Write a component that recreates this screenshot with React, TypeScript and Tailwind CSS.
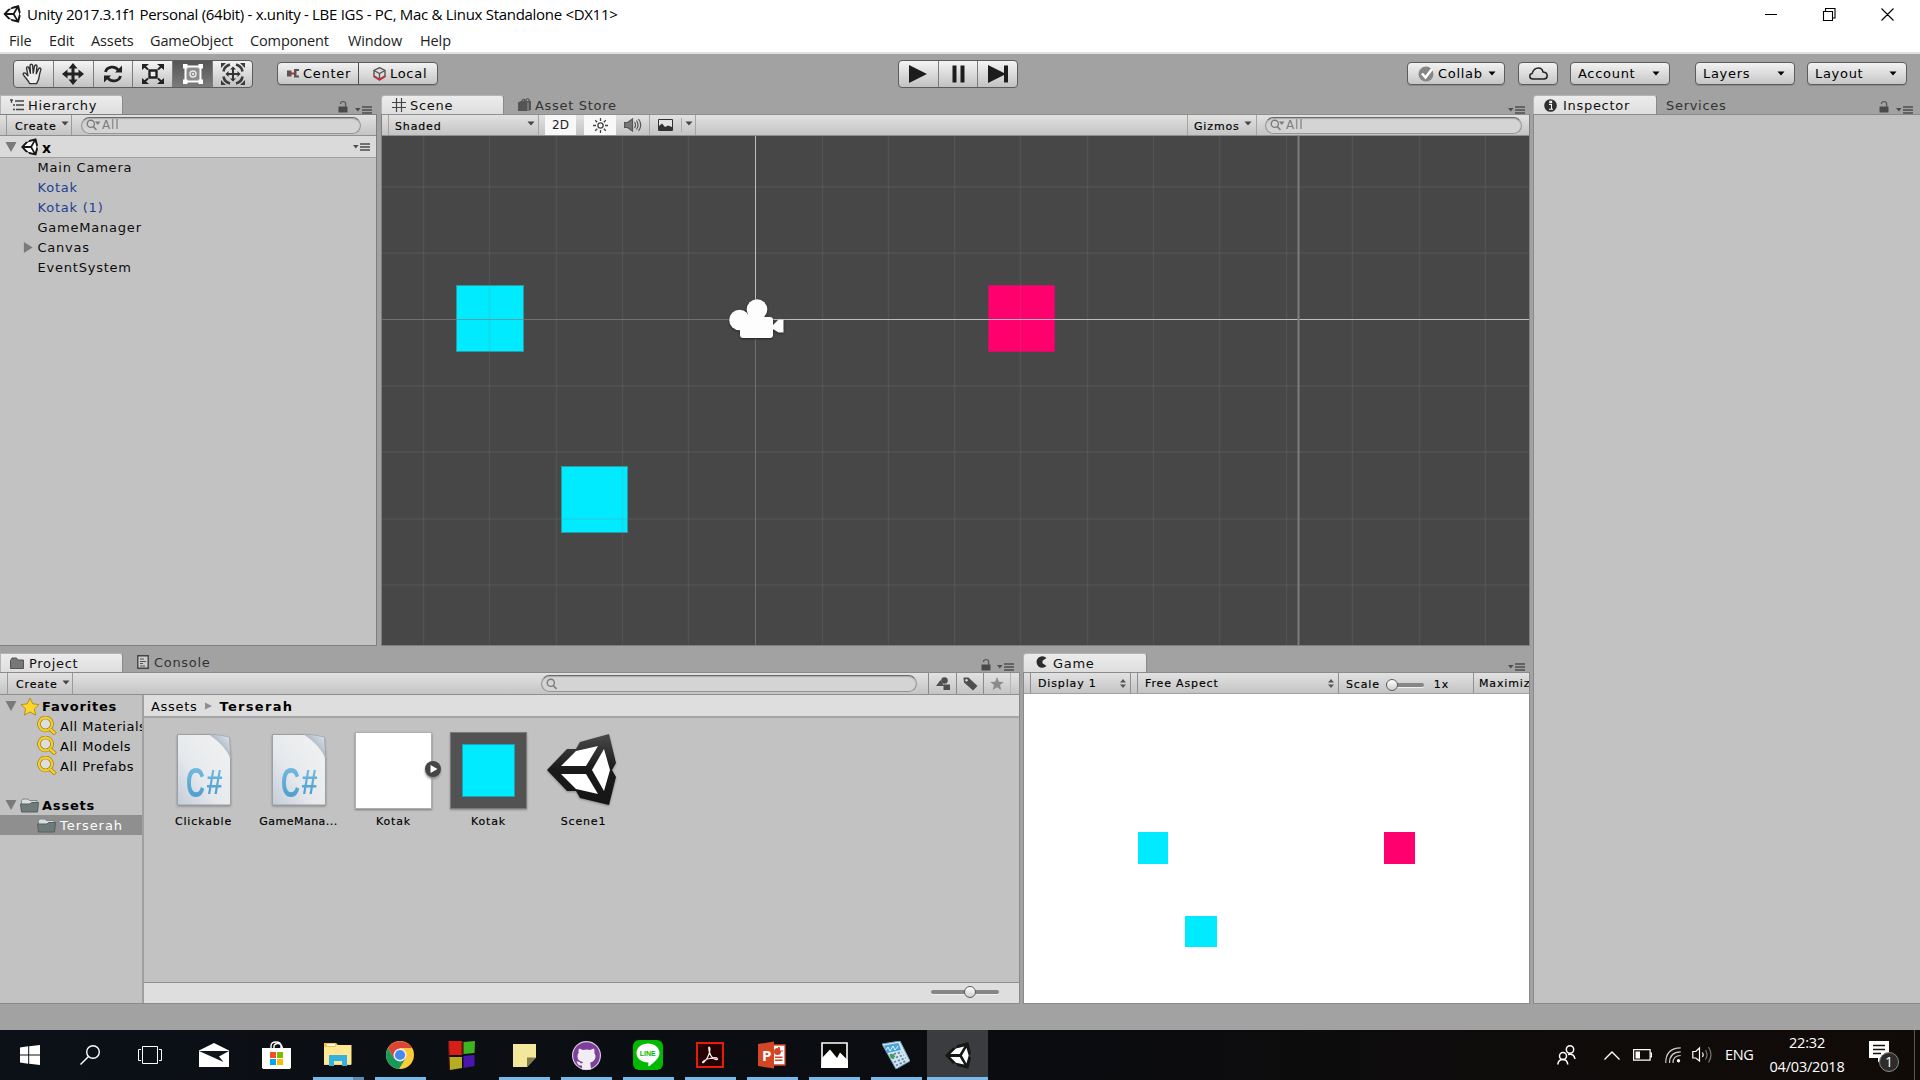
import React from "react";

const ui = "font-['DejaVu_Sans',sans-serif] whitespace-nowrap leading-none";
const text = ui + " text-[13px] tracking-[0.7px]";
const small = ui + " text-[11px] tracking-[0.85px] [-webkit-text-stroke:0.15px]";
const win = "font-['Open_Sans','Noto_Sans',sans-serif] whitespace-nowrap leading-none";
const barBg = "bg-linear-to-b from-[#e2e2e2] to-[#c4c4c4]";
const btn =
  "flex h-[23px] items-center rounded-[4px] border border-[#5c5c5c] bg-linear-to-b from-[#f2f2f2] to-[#c6c6c6] shadow-[0_1px_0_#8a8a8a]";

type P = { className?: string };

function UnityLogo({ className = "", light = false }: P & { light?: boolean }) {
  return (
    <svg viewBox="0 0 69 72" className={"shrink-0 " + className}>
      <defs>
        <linearGradient id="ul" x1="0" y1="0" x2="0" y2="1">
          <stop offset="0" stopColor="#4a4a4a" />
          <stop offset="0.5" stopColor="#191919" />
          <stop offset="1" stopColor="#161616" />
        </linearGradient>
      </defs>
      <path
        fill={light ? "#161616" : "url(#ul)"}
        d="M0 36 20 15h9l4-7L62 0l7 29-4 7 4 7-7 28-29-7-4-7h-9z"
      />
      <path fill="#fff" d="M14 32 29 17l22-5-12 20zM14 40h25l12 20-22-5zM45 36l12-21 6 21-6 21z" />
    </svg>
  );
}

function Caret({ className = "" }: P) {
  return (
    <svg viewBox="0 0 8 5" className={"h-[5px] w-[8px] shrink-0 " + className}>
      <path d="M0.5 0.5h7L4 4.6z" fill="currentColor" />
    </svg>
  );
}

function Fold() {
  return (
    <svg viewBox="0 0 12 10" className="h-[10px] w-[12px] shrink-0">
      <path d="M0.500 0h11L6 10z" fill="#7a7a7a" />
    </svg>
  );
}

function PanelMenu({ className = "" }: P) {
  return (
    <svg viewBox="0 0 17 8" className={"h-[8px] w-[17px] shrink-0 text-[#4d4d4d] " + className}>
      <path d="M0 2h5.600L2.800 5.500z" fill="currentColor" />
      <path d="M7 1h10M7 4h10M7 7h10" stroke="currentColor" strokeWidth="1.300" />
    </svg>
  );
}

function Lock({ className = "" }: P) {
  return (
    <svg viewBox="0 0 10 12" className={"h-[12px] w-[10px] shrink-0 " + className}>
      <path d="M0.500 5.500h9v6h-9z" fill="#4a4a4a" />
      <path d="M2.600 3V2.200C2.600 1 3.600.7 5 .7s2.600.5 2.600 2V6" fill="none" stroke="#5a5a5a" strokeWidth="1.300" />
    </svg>
  );
}

function Tab({ icon, label, className = "" }: P & { icon: React.ReactNode; label: string }) {
  return (
    <div
      className={
        "flex h-[19px] shrink-0 items-center rounded-t-[3px] border-x border-t border-[#b4b4b4] border-r-[#8a8a8a] bg-linear-to-b from-[#ececec] to-[#dedede] " +
        className
      }
    >
      {icon}
      <span className={text + " text-[#111]"}>{label}</span>
    </div>
  );
}

function Search({ className = "", label, arrow = true }: P & { label?: string; arrow?: boolean }) {
  return (
    <div
      className={
        "flex h-[17px] shrink-0 items-center rounded-full border border-[#959595] border-t-[#6a6a6a] bg-[#d4d4d4] pl-[4px] shadow-[inset_0_1px_1px_#a9a9a9] " +
        className
      }
    >
      <svg viewBox="0 0 15 12" className="h-[12px] w-[15px] shrink-0">
        <circle cx="4.800" cy="4.800" r="3.600" fill="none" stroke="#7c7c7c" strokeWidth="1.400" />
        <path d="M7.400 7.600 10.500 11" stroke="#7c7c7c" strokeWidth="1.600" />
        {arrow && <path d="M9 2.500h5.500l-2.700 3.500z" fill="#7c7c7c" />}
      </svg>
      <span className={ui + " ml-[1px] text-[12px] tracking-[0.8px] text-[#7d7d7d]"}>{label}</span>
    </div>
  );
}

function Create({ className = "" }: P) {
  return (
    <div className={"flex h-full items-center border-x border-[#9a9a9a] pl-[8px] " + className}>
      <span className={small + " mt-[2px] text-black"}>Create</span>
      <Caret className="mb-[3px] ml-[4px] h-[4px] w-[6px] text-[#444]" />
    </div>
  );
}

const tools = [
  <svg key="h" viewBox="0 0 24 24" className="size-[22px]" fill="none" stroke="#333" strokeWidth="1.500" strokeLinejoin="round" strokeLinecap="round">
    <path d="M8.300 22.500C7 19 3 15.500 1.500 12.800c-.8-1.700 1-2.700 2.300-1.500L6.500 14 5 5.800C4.800 4 7 3.600 7.500 5.200l1.700 6-.4-8.400c0-1.900 2.600-1.900 2.800 0l.6 8.200 1.500-7.700c.5-1.700 2.800-1.300 2.600.5l-.8 8 2.600-5.500c.9-1.500 3-.5 2.400 1.200-1 3-1.500 5-2 8.500-.4 3-2 4.500-2.500 6.500z" fill="#eee" />
  </svg>,
  <svg key="m" viewBox="0 0 22 22" className="size-[22px]">
    <path fill="#222" d="m11 0 4.500 5.500h-3v4h4v-3L22 11l-5.500 4.500v-3h-4v4h3L11 22l-4.500-5.500h3v-4h-4v3L0 11l5.500-4.500v3h4v-4h-3z" />
  </svg>,
  <svg key="r" viewBox="0 0 20 20" className="size-[20px]" fill="none" stroke="#222" strokeWidth="2.800">
    <path d="M2.500 8C4 2.500 12 1 15.500 6.500M17.500 12C16 17.500 8 19 4.500 13.500" />
    <path d="M19 1.500V8.500h-7zM1 18.500v-7h7z" fill="#222" stroke="none" />
  </svg>,
  <svg key="s" viewBox="0 0 22 20" className="h-[20px] w-[22px]">
    <path d="M7.500 6.500h7v7h-7z" fill="#eee" stroke="#222" strokeWidth="2.400" />
    <path d="M0 0h7L0 6zM22 0h-7l7 6zM0 20h7l-7-6zM22 20h-7l7-6z" fill="#222" />
    <path d="m1 1 5 4.500M21 1l-5 4.500M1 19l5-4.500M21 19l-5-4.500" stroke="#222" strokeWidth="2" />
  </svg>,
  <svg key="q" viewBox="0 0 22 22" className="size-[22px]">
    <path d="M3.500 3.500h15v15h-15z" fill="#8d8d8d" stroke="#fff" strokeWidth="2" />
    <path d="M1 1h4.500v4.500H1zM16.500 1H21v4.500h-4.500zM1 16.500h4.500V21H1zM16.500 16.500H21V21h-4.500z" fill="#fff" />
    <circle cx="11" cy="11" r="3" fill="none" stroke="#e8e8e8" strokeWidth="1.400" />
    <circle cx="11" cy="11" r="1" fill="#fff" />
  </svg>,
  <svg key="t" viewBox="0 0 24 22" className="h-[22px] w-[24px]" fill="none" stroke="#3c3c3c">
    <path d="m12 3.500 3 3h-2v3.500h3.500V8l3 3-3 3v-2H13v3.500h2l-3 3-3-3h2V12H7.500v2l-3-3 3-3v2H11V6.500H9z" fill="#333" stroke="none" />
    <path d="M2.500 8.500C3 5 5.500 2.500 9 1.500M21.500 8.500C21 5 18.500 2.500 15 1.500M2.500 13.500C3 17 5.500 19.500 9 20.500M21.500 13.500c-.5 3.500-3 6-6.500 7" strokeWidth="2.600" />
    <path d="M0 0h5L0 5zM24 0h-5l5 5zM0 22h5l-5-5zM24 22h-5l5-5z" fill="#3c3c3c" stroke="none" />
  </svg>,
];

function Toolbar() {
  return (
    <div className="flex h-[41px] shrink-0 items-start pt-[6px]">
      <div className="ml-[13px] flex h-[28px] w-[240px] overflow-hidden rounded-[4px] border border-[#5c5c5c] bg-linear-to-b from-[#f4f4f4] to-[#c2c2c2]">
        {tools.map((t, i) => (
          <div
            key={i}
            className={
              "flex flex-1 items-center justify-center " +
              (i < 5 ? "border-r border-[#7c7c7c] " : "") +
              (i === 4 ? "bg-linear-to-b from-[#555] to-[#7c7c7c]" : "")
            }
          >
            {t}
          </div>
        ))}
      </div>
      <div className={btn + " mt-[2px] ml-[24px] w-[161px]"}>
        <div className="flex h-full w-[81px] items-center border-r border-[#4c4c4c] pl-[9px]">
          <svg viewBox="0 0 12 10" className="mr-[4px] h-[10px] w-[12px]">
            <path d="M0 1.500h4.500v6H0zM7 0h5v2H9.500v4.500H12v2H7z" fill="#555" />
            <path d="M3 4.500h5" stroke="#b03038" strokeWidth="2" />
          </svg>
          <span className={text}>Center</span>
        </div>
        <div className="flex h-full flex-1 items-center pl-[14px]">
          <svg viewBox="0 0 13 14" className="mr-[4px] h-[14px] w-[13px]">
            <path d="M6.500.7 12 3.500v6L6.500 13 1 9.500v-6z" fill="#ddd" stroke="#555" strokeWidth="1.400" />
            <path d="M1 3.500 6.500 6.500 12 3.500M6.500 6.500V13" fill="none" stroke="#555" strokeWidth="1.400" />
            <path d="m1 9 5.500 3.600L12 9" fill="none" stroke="#c0323c" strokeWidth="1.800" />
          </svg>
          <span className={text}>Local</span>
        </div>
      </div>
      <div className="ml-[460px] flex h-[28px] w-[120px] overflow-hidden rounded-[4px] border border-[#5c5c5c] bg-linear-to-b from-[#f4f4f4] to-[#c2c2c2]">
        <div className="flex flex-1 items-center justify-center border-r border-[#7c7c7c]">
          <svg viewBox="0 0 18 18" className="size-[18px]"><path d="M0 0 18 9 0 18z" fill="#1c1c1c" /></svg>
        </div>
        <div className="flex flex-1 items-center justify-center border-r border-[#7c7c7c]">
          <svg viewBox="0 0 13 18" className="h-[18px] w-[13px]"><path d="M0.500.5h4v17h-4zM8.500.5h4v17h-4z" fill="#1c1c1c" /></svg>
        </div>
        <div className="flex flex-1 items-center justify-center">
          <svg viewBox="0 0 20 18" className="h-[18px] w-[20px]"><path d="M0 0l16 8V.5h4v17h-4V10L0 18z" fill="#1c1c1c" /></svg>
        </div>
      </div>
      <div className={btn + " mt-[2px] ml-[389px] w-[98px] pl-[10px]"}>
        <svg viewBox="0 0 16 16" className="mr-[4px] size-[16px]">
          <circle cx="8" cy="8" r="7.500" fill="#868686" />
          <path d="m4 7.500 3.500 4L14 3" fill="none" stroke="#fff" strokeWidth="2.600" />
        </svg>
        <span className={text}>Collab</span>
        <Caret className="ml-[5px] h-[4px] w-[7px]" />
      </div>
      <div className={btn + " mt-[2px] ml-[13px] w-[40px] justify-center"}>
        <svg viewBox="0 0 19 13" className="h-[13px] w-[19px]" fill="none" stroke="#222" strokeWidth="1.500">
          <path d="M4 12C1.500 12 .8 10.500.8 9.200c0-1.400 1-2.400 2.300-2.600C4 3.500 6.500 1 9.500 1c2.700 0 4 1.500 4.500 4 2.500.2 4.200 1.800 4.200 3.800S16.800 12 15 12z" />
        </svg>
      </div>
      {[
        ["Account", "ml-[12px] w-[100px]"],
        ["Layers", "ml-[25px] w-[100px]"],
        ["Layout", "ml-[12px] w-[100px]"],
      ].map(([l, c]) => (
        <div key={l} className={btn + " mt-[2px] justify-between pr-[9px] pl-[7px] " + c}>
          <span className={text}>{l}</span>
          <Caret className="h-[4px] w-[7px]" />
        </div>
      ))}
    </div>
  );
}

const treeRow = "flex h-[20px] items-center " + text;

function Hierarchy() {
  return (
    <div className="flex w-[377px] flex-col">
      <div className="flex h-[19px] items-end">
        <Tab
          className="w-[123px] rounded-tl-none pl-[9px]"
          label="Hierarchy"
          icon={
            <svg viewBox="0 0 14 12" className="mr-[4px] h-[12px] w-[14px]" stroke="#444" strokeWidth="1.300">
              <path d="M0 1h3M5 2h9M3 6h2M6 6h8M3 10.500h2M6 10.500h8M1.500 1v3" />
            </svg>
          }
        />
        <Lock className="mb-[1px] ml-[215px]" />
        <PanelMenu className="ml-[7px]" />
      </div>
      <div className="flex h-[532px] flex-col border-t border-r border-b border-[#7f7f7f] bg-[#c2c2c2]">
        <div className={"flex h-[21px] items-center border-b border-[#8f8f8f] " + barBg}>
          <Create className="ml-[6px] w-[66px]" />
          <Search className="ml-[9px] w-[280px]" label="All" />
        </div>
        <div className="flex h-[22px] items-center border-b border-[#a0a0a0] bg-[#dadada] pl-[5px]">
          <Fold />
          <UnityLogo light className="ml-[4px] h-[18px] w-[17px]" />
          <span className={ui + " mt-[2px] ml-[4px] text-[14px] font-bold"}>x</span>
          <PanelMenu className="mr-[6px] ml-auto" />
        </div>
        <div className="-mt-[1px]">
          {["Main Camera", "Kotak", "Kotak (1)", "GameManager", "Canvas", "EventSystem"].map((n) => (
            <div key={n} className={treeRow + " tracking-[0.78px]!" + (n.startsWith("Kotak") ? " text-[#1f3f93]" : " text-[#0c0c0c]")}>
              <div className="flex w-[37.5px] pl-[23px]">
                {n === "Canvas" && (
                  <svg viewBox="0 0 10 12" className="h-[11px] w-[10px]"><path d="M0.500 0 10 6 .5 12z" fill="#7a7a7a" /></svg>
                )}
              </div>
              {n}
            </div>
          ))}
        </div>
      </div>
    </div>
  );
}

const cols = [41.5, 107.5, 174.5, 240.5, 306.5, 440.5, 506.5, 572.5, 638.5, 705.5, 771.5, 837.5, 904.5, 970.5, 1037.5, 1103.5];
const rows = [51, 117, 250, 316, 383, 449];

function SceneCanvas() {
  return (
    <div className="relative h-[510px] overflow-hidden bg-[#474747]">
      <div className="absolute top-[149px] left-[74px] h-[67px] w-[68px] border border-[#2b9aa3] bg-[#00ebff]" />
      <div className="absolute top-[330px] left-[179px] h-[67px] w-[67px] border border-[#2b9aa3] bg-[#00ebff]" />
      <div className="absolute top-[149px] left-[606px] h-[67px] w-[67px] border border-[#c11862] bg-[#ff006e]" />
      <svg width="1147" height="510" className="absolute inset-0">
        {cols.map((x) => (
          <path key={x} d={`M${x} 0V510`} stroke="#808080" strokeOpacity="0.2" strokeWidth="1.400" />
        ))}
        {rows.map((y) => (
          <path key={y} d={`M0 ${y}H1147`} stroke="#808080" strokeOpacity="0.2" strokeWidth="1.400" />
        ))}
        <path d="M0 183.500H374M373.500 184V510" stroke="#808080" strokeOpacity="0.7" />
        <path d="M373.500 0V183.500H1147" fill="none" stroke="#bdbdbd" />
        <path d="M916.500 0V510" stroke="#7d7d7d" strokeWidth="2" />
        <g fill="#fdfdfd" className="drop-shadow-[0_1px_1px_#222]">
          <circle cx="357.500" cy="184" r="10.300" />
          <circle cx="375" cy="173.500" r="10.300" />
          <rect x="358" y="181" width="33" height="21" rx="3" />
          <path d="M366 175h12v12h-12zM390 190l6.500-6.500h5v13h-5l-6.500-4z" />
        </g>
      </svg>
    </div>
  );
}

function Scene() {
  return (
    <div className="flex w-[1149px] flex-col">
      <div className="flex h-[19px] items-end">
        <Tab
          className="w-[123px] pl-[10px]"
          label="Scene"
          icon={
            <svg viewBox="0 0 14 14" className="mr-[4px] size-[14px]" stroke="#444" strokeWidth="1.200">
              <path d="M4.500 0v14M9.500 0v14M0 4.500h14M0 9.500h14" />
            </svg>
          }
        />
        <svg viewBox="0 0 13 13" className="mb-[3px] ml-[14px] size-[13px]">
          <path d="M0 4.500 3 3h10v9l-3 1H0z" fill="#555" />
          <path d="M4 5V2.500Q5 .7 6.500 1.500V5M8 3V1.500Q10 0 11 1.500V3" fill="none" stroke="#555" strokeWidth="1.200" />
          <path d="M10 4.500V13" stroke="#999" />
        </svg>
        <span className={text + " mb-[2px] ml-[4px] text-[#333]"}>Asset Store</span>
        <PanelMenu className="mr-[5px] ml-auto" />
      </div>
      <div className="flex h-[532px] flex-col border border-[#7f7f7f] border-t-[#8f8f8f]">
        <div className={"flex h-[21px] shrink-0 items-center border-b border-[#8f8f8f] text-[#222] " + barBg}>
          <div className="ml-[6px] flex h-full w-[151px] items-center justify-between border-x border-[#a4a4a4] pr-[3px] pl-[6px]">
            <span className={small + " mt-[2px] text-black"}>Shaded</span>
            <Caret className="mb-[3px] h-[4px] w-[6px] text-[#444]" />
          </div>
          <div className={ui + " ml-[6px] flex h-full w-[31px] items-center justify-center bg-[#f8f8f8] text-[12px]"}>2D</div>
          <div className="ml-[8px] flex h-full w-[32px] items-center justify-center bg-[#f8f8f8]">
            <svg viewBox="0 0 15 15" className="size-[15px]" fill="none" stroke="#444" strokeWidth="1.300">
              <circle cx="7.500" cy="7.500" r="2.600" />
              <path d="M7.500 0v3M7.500 12v3M0 7.500h3M12 7.500h3M2.200 2.200l2 2M10.800 10.800l2 2M2.200 12.800l2-2M10.800 4.200l2-2" />
            </svg>
          </div>
          <div className="flex h-full w-[34px] items-center justify-center border-r border-[#a4a4a4]">
            <svg viewBox="0 0 18 14" className="h-[14px] w-[18px]" fill="none" stroke="#555" strokeWidth="1.200">
              <path d="M0.500 4.500h3L8.500 1v12L3.500 9.500h-3z" fill="#777" />
              <path d="M10.500 4q2 3 0 6M12.500 2.500q3 4.500 0 9M14.500 1q4.500 6 0 12" />
            </svg>
          </div>
          <div className="flex h-full w-[46px] items-center border-r border-[#a4a4a4]">
            <svg viewBox="0 0 15 12" className="ml-[8px] h-[12px] w-[15px]">
              <path d="M0.500.5h14v11H.5z" fill="#e4e4e4" stroke="#333" />
              <path d="M1 7 4 4.500 7 8l3-1.500L14 8v3.500H1z" fill="#333" />
            </svg>
            <div className="ml-[8px] h-[14px] w-px bg-[#aaa]" />
            <Caret className="mb-[3px] ml-[3px] h-[4px] w-[6px] text-[#444]" />
          </div>
          <div className="ml-[491px] flex h-full w-[70px] items-center justify-between border-x border-[#a4a4a4] pr-[4px] pl-[6px]">
            <span className={small + " mt-[2px] text-black"}>Gizmos</span>
            <Caret className="mb-[3px] h-[4px] w-[6px] text-[#444]" />
          </div>
          <Search className="ml-[8px] w-[257px]" label="All" />
        </div>
        <SceneCanvas />
      </div>
    </div>
  );
}

function Folder({ className = "" }: P) {
  return (
    <svg viewBox="0 0 19 16" className={"h-[16px] w-[19px] shrink-0 " + className}>
      <path d="M1.500 3.500 3 2h5l1.500 1.500H17V14H1.500z" fill="#d9dddd" stroke="#7d8585" />
      <path d="M0.500 7H10l1.500-1.500h7L17.500 15h-16z" fill="#6f7b7b" stroke="#56605f" />
    </svg>
  );
}

function Loupe() {
  return (
    <svg viewBox="0 0 20 20" className="mr-[3px] size-[20px] shrink-0">
      <circle cx="8.500" cy="8" r="6.500" fill="#dedede" stroke="#8c7520" strokeWidth="3.600" />
      <circle cx="8.500" cy="8" r="6.500" fill="none" stroke="#f6cf2b" strokeWidth="2.300" />
      <path d="m13 13 5.500 5" stroke="#a8871a" strokeWidth="4" />
      <path d="m13 13 5 4.500" stroke="#f6cf2b" strokeWidth="2.400" />
    </svg>
  );
}

function ProjectTree() {
  return (
    <div className="w-[144px] shrink-0 overflow-hidden border-r-2 border-[#a0a0a0] pt-[1px]">
      <div className={treeRow + " pl-[5px] font-bold tracking-[0.8px]!"}>
        <Fold />
        <svg viewBox="0 0 20 19" className="mr-[2px] ml-[3px] h-[19px] w-[20px] shrink-0">
          <path d="m10 1 2.700 5.800 6.300.8-4.600 4.300 1.200 6.200L10 15l-5.600 3.100 1.200-6.200L1 7.600l6.300-.8z" fill="#fbd72b" stroke="#b58d22" />
        </svg>
        Favorites
      </div>
      {["All Materials", "All Models", "All Prefabs"].map((n) => (
        <div key={n} className={treeRow + " pl-[37px] tracking-[0.5px]!"}>
          <Loupe />
          {n}
        </div>
      ))}
      <div className={treeRow + " mt-[19px] pl-[5px] font-bold tracking-[0.8px]!"}>
        <Fold />
        <Folder className="mr-[3px] ml-[3px]" />
        Assets
      </div>
      <div className={treeRow + " bg-[#8f8f8f] pl-[37px] text-white tracking-[0.95px]!"}>
        <Folder className="mr-[4px]" />
        Terserah
      </div>
    </div>
  );
}

function CsFile() {
  return (
    <svg viewBox="0 0 54 72" className="h-[72px] w-[54px] drop-shadow-[0_1px_1px_#888]">
      <defs>
        <linearGradient id="pg" x1="1" y1="0" x2="0" y2="1">
          <stop offset="0" stopColor="#f2f2f2" />
          <stop offset="0.600" stopColor="#e6e9ec" />
          <stop offset="1" stopColor="#c3ccd6" />
        </linearGradient>
        <linearGradient id="fold" x1="0" y1="1" x2="1" y2="0">
          <stop offset="0.400" stopColor="#9fb0bf" />
          <stop offset="1" stopColor="#e4e8ec" />
        </linearGradient>
        <linearGradient id="cs" x1="0" y1="0" x2="0" y2="1">
          <stop offset="0" stopColor="#7cc4e4" />
          <stop offset="1" stopColor="#4596cc" />
        </linearGradient>
      </defs>
      <path d="M0.500.5H32Q44 1 52 3.500L53.500 25v46H.5z" fill="url(#pg)" stroke="#9aa0a6" />
      <path d="M32 .5Q44 1 52 3.500L53.500 25Q49 12 32 .5z" fill="url(#fold)" />
      <text x="9" y="62.500" fontSize="43" textLength="19" lengthAdjust="spacingAndGlyphs" fontWeight="bold" fontFamily="Liberation Sans" fill="url(#cs)">C</text>
      <text x="29.500" y="59.500" fontSize="35" textLength="16" lengthAdjust="spacingAndGlyphs" fontFamily="Liberation Sans" fontWeight="bold" fill="url(#cs)">#</text>
    </svg>
  );
}

const assets: [string, React.ReactNode][] = [
  ["Clickable", <CsFile key="a" />],
  ["GameMana...", <CsFile key="b" />],
  [
    "Kotak",
    <div key="c" className="relative size-[77px] border border-[#b0b0b0] bg-white shadow-[0_1px_2px_#777]">
      <svg viewBox="0 0 18 18" className="absolute top-[27px] left-[68px] size-[18px] drop-shadow-[0_2px_1px_#8a8a8a]">
        <circle cx="9" cy="9" r="8" fill="#454545" />
        <path d="m6.500 5 7 4-7 4z" fill="#fff" />
      </svg>
    </div>,
  ],
  [
    "Kotak",
    <div key="d" className="flex size-[77px] items-center justify-center border border-[#7a7a7a] bg-[#525252] shadow-[0_1px_2px_#888]">
      <div className="size-[53px] border border-[#1ba3b2] bg-[#00ebff]" />
    </div>,
  ],
  ["Scene1", <UnityLogo key="e" className="mr-[4px] h-[72px] w-[69px] drop-shadow-[0_1px_1px_#888]" />],
];

function Slider({ className = "", knob }: P & { knob: string }) {
  return (
    <div className={"flex h-[4px] shrink-0 items-center rounded-full bg-[#868686] shadow-[0_1px_0_#eee] " + className}>
      <div className={"size-[12px] shrink-0 rounded-full border border-[#5c5c5c] bg-linear-to-b from-white to-[#cfcfcf] " + knob} />
    </div>
  );
}

function Project() {
  return (
    <div className="flex w-[1020px] flex-col">
      <div className="flex h-[19px] items-end">
        <Tab
          className="w-[123px] rounded-tl-none pl-[9px]"
          label="Project"
          icon={
            <svg viewBox="0 0 14 12" className="mr-[5px] h-[12px] w-[14px]">
              <path d="M0.500 3.500 2 1h4.500L8 3h5.500v8.500H.5z" fill="#777" stroke="#555" />
            </svg>
          }
        />
        <svg viewBox="0 0 12 14" className="mb-[3px] ml-[14px] h-[14px] w-[12px]">
          <path d="M0.800.8h10.400v12.400H.8z" fill="#ccc" stroke="#444" strokeWidth="1.400" />
          <path d="M3 4h4M3 6.500h6M3 8.500h3M3 11h5" stroke="#555" />
        </svg>
        <span className={text + " mb-[3px] ml-[5px] text-[#333]"}>Console</span>
        <Lock className="mb-[1px] ml-auto" />
        <PanelMenu className="mr-[6px] mb-[1px] ml-[6px]" />
      </div>
      <div className="flex h-[332px] flex-col border-t border-r border-b border-[#8a8a8a] bg-[#c2c2c2]">
        <div className={"flex h-[22px] shrink-0 items-center border-b border-[#8f8f8f] " + barBg}>
          <Create className="ml-[7px] w-[66px]" />
          <Search className="ml-[468px] w-[376px]" arrow={false} />
          <div className="ml-[11px] flex h-full w-[28px] items-center justify-center border-l border-[#8a8a8a]">
            <svg viewBox="0 0 14 13" className="h-[13px] w-[14px]" fill="#4e4e4e">
              <path d="M0 9 4.500 3 8 9zM7.500 7.500H14V13H7.500z" />
              <circle cx="8.500" cy="3.500" r="3.300" />
            </svg>
          </div>
          <div className="flex h-full w-[27px] items-center justify-center border-l border-[#8a8a8a]">
            <svg viewBox="0 0 15 14" className="h-[14px] w-[15px]">
              <path d="M0.500.5h5L14.500 9 10 13.500 1 5.500z" fill="#4e4e4e" />
              <circle cx="3.500" cy="3.300" r="1.200" fill="#ddd" />
            </svg>
          </div>
          <div className="flex h-full w-[28px] items-center justify-center border-x border-[#8a8a8a] border-r-[#b4b4b4]">
            <svg viewBox="0 0 20 19" className="h-[13px] w-[14px]">
              <path d="m10 0 2.700 6.800 7.300.5-5.600 4.500 1.800 7.200L10 15l-6.200 4 1.800-7.200L0 7.300l7.300-.5z" fill="#8b8b8b" />
            </svg>
          </div>
        </div>
        <div className="flex flex-1">
          <ProjectTree />
          <div className="flex flex-1 flex-col">
            <div className="flex h-[23px] items-center border-b-2 border-[#a6a6a6] bg-[#dedede] pt-[1px] pl-[7px]">
              <span className={text}>Assets</span>
              <svg viewBox="0 0 7 8" className="mr-[8px] ml-[7px] h-[8px] w-[7px]"><path d="M0 .5 7 4 0 7.500z" fill="#8f8f8f" /></svg>
              <span className={ui + " text-[13px] font-bold tracking-[1.3px]"}>Terserah</span>
            </div>
            <div className="flex flex-1 pt-[12px] pl-[12px]">
              {assets.map(([n, pic], i) => (
                <div key={i} className="flex w-[95px] flex-col items-center">
                  <div className="flex h-[80px] items-center">{pic}</div>
                  <span className={small + " mt-[6px]" + (n.length > 9 ? " tracking-[0.5px]!" : "")}>{n}</span>
                </div>
              ))}
            </div>
            <div className="flex h-[21px] items-center justify-end border-t border-[#8f8f8f] bg-[#dedede] pr-[20px] pb-[2px]">
              <Slider className="w-[68px]" knob="ml-[33px]" />
            </div>
          </div>
        </div>
      </div>
    </div>
  );
}

function UpDown() {
  return (
    <svg viewBox="0 0 6 9" className="h-[9px] w-[6px]">
      <path d="M3 0 6 3.500H0zM3 9 0 5.500h6z" fill="#555" />
    </svg>
  );
}

function Game() {
  return (
    <div className="flex w-[507px] shrink-0 flex-col">
      <div className="flex h-[19px] items-end">
        <Tab
          className="w-[124px] pl-[12px]"
          label="Game"
          icon={
            <svg viewBox="0 0 12 12" className="mr-[5px] mb-[2px] size-[12px]">
              <path d="M10.500 2A5.800 5.800 0 1 0 10.500 10L6.500 7.200V4.800z" fill="#2c2c2c" />
            </svg>
          }
        />
        <PanelMenu className="mr-[5px] mb-[1px] ml-auto" />
      </div>
      <div className="flex h-[332px] flex-col border border-[#8a8a8a] bg-white">
        <div className={"flex h-[21px] shrink-0 items-center overflow-hidden border-b border-[#a0a0a0] " + barBg}>
          <div className="ml-[6px] flex h-full w-[101px] shrink-0 items-center justify-between border-x border-[#8f8f8f] pr-[4px] pl-[7px]">
            <span className={small}>Display 1</span>
            <UpDown />
          </div>
          <div className="ml-[6px] flex h-full w-[202px] shrink-0 items-center justify-between border-x border-[#8f8f8f] pr-[4px] pl-[7px]">
            <span className={small}>Free Aspect</span>
            <UpDown />
          </div>
          <span className={small + " mt-[3px] ml-[7px]"}>Scale</span>
          <Slider className="mt-[3px] ml-[6px] w-[38px]" knob="" />
          <span className={small + " mt-[3px] ml-[10px]"}>1x</span>
          <div className={small + " ml-auto flex h-full w-[56px] shrink-0 items-center overflow-hidden border-l border-[#8f8f8f] pl-[5px]"}>Maximize</div>
        </div>
        <div className="relative flex-1">
          <div className="absolute top-[138px] left-[114px] h-[32px] w-[30px] bg-[#00ebff]" />
          <div className="absolute top-[222px] left-[161px] h-[31px] w-[32px] bg-[#00ebff]" />
          <div className="absolute top-[138px] left-[360px] h-[32px] w-[31px] bg-[#ff006e]" />
        </div>
      </div>
    </div>
  );
}

function Inspector() {
  return (
    <div className="flex w-[387px] flex-col">
      <div className="flex h-[19px] items-end">
        <Tab
          className="w-[124px] pl-[10px]"
          label="Inspector"
          icon={
            <svg viewBox="0 0 13 13" className="mr-[6px] size-[13px]">
              <circle cx="6.500" cy="6.500" r="6.300" fill="#2f2f2f" />
              <path d="M5 5.500h2.500V10M5 10.200h4M5.800 2.200h1.800v1.600H5.800z" stroke="#fff" strokeWidth="1.100" fill="none" />
            </svg>
          }
        />
        <span className={text + " mb-[2px] ml-[9px] text-[#333]"}>Services</span>
        <Lock className="mb-[1px] ml-auto" />
        <PanelMenu className="mr-[7px] ml-[7px]" />
      </div>
      <div className="h-[890px] border-t border-b border-l border-[#8a8a8a] bg-[#c2c2c2]" />
    </div>
  );
}

const apps: [string, React.ReactNode, string][] = [
  ["mail", (
    <svg viewBox="0 0 30 24" className="h-[24px] w-[30px]">
      <path d="M15 0 30 7.500V24H0V7.500z" fill="#fff" />
      <path d="M0 8h30L20 13.500 24.500 19z" fill="#10151a" />
    </svg>), "none"],
  ["store", (
    <svg viewBox="0 0 29 28" className="h-[28px] w-[29px]">
      <path d="M9 8V5q0-4 5-4t5 4v3M12 8V5q1-3 4.500-2.500T20.500 8" fill="none" stroke="#fff" strokeWidth="1.400" />
      <path d="M0 7h29v19.500L28 28H1l-1-1.500z" fill="#fff" />
      <path d="M8 11h6v6H8z" fill="#f25022" /><path d="M15 11h6v6h-6z" fill="#7fba00" />
      <path d="M8 18h6v6H8z" fill="#00a4ef" /><path d="M15 18h6v6h-6z" fill="#ffb900" />
    </svg>), "none"],
  ["explorer", (
    <svg viewBox="0 0 28 26" className="h-[26px] w-[28px]">
      <path d="M0 1h12l2 2h13v20H0z" fill="#f3c544" /><path d="M3 2h8v2H3z" fill="#fffbe8" />
      <path d="M0 5h11l2-2h14.500v19.500H0z" fill="#ffe793" />
      <path d="M5 24V13h18v11h-5v-5h-8v5z" fill="#33b1e1" />
    </svg>), "split"],
  ["chrome", (
    <svg viewBox="0 0 28 28" className="size-[28px]">
      <circle cx="14" cy="14" r="14" fill="#fdcb3a" />
      <path d="M14 7h12.100A14 14 0 0 0 2 7l6 10.500z" fill="#dc4437" />
      <path d="M1.900 7A14 14 0 0 0 13 28l6.500-10.500L8 17.500z" fill="#159a5b" />
      <circle cx="14" cy="14" r="6.500" fill="#f1f1f1" /><circle cx="14" cy="14" r="5.100" fill="#4a88ee" />
    </svg>), "line"],
  ["cubes", (
    <svg viewBox="0 0 28 30" className="h-[30px] w-[28px]">
      <path d="M0 1h15v14H1z" fill="#d51f17" /><path d="M15.500 2 27 1l-.5 12-11 1z" fill="#3cb521" />
      <path d="M1 17h13v11L2 30z" fill="#b5ae23" /><path d="m15.500 16 11-1v11l-11 2z" fill="#4b16ae" />
      <path d="M0 1h1l1 29-1-1zM13.500 1h1.500v14h-1.500z" fill="#641313" />
    </svg>), "none"],
  ["notes", (
    <svg viewBox="0 0 23 23" className="size-[23px]">
      <path d="M0 0h23v13.500L14 23H0z" fill="#f3e79b" /><path d="M14 13.500h9L14 23z" fill="#827b4d" />
    </svg>), "line"],
  ["github", (
    <svg viewBox="0 0 29 29" className="size-[29px]">
      <circle cx="14.500" cy="14.500" r="13.900" fill="#7d3f9b" stroke="#d8c8e2" strokeWidth="1.200" />
      <path d="M7 7.500 11 9q3.500-1 7 0l4-1.500q1 2.500.3 4.500 2.500 3.500 0 7-1.500 2-4 2.500l.7 7h-9v-4q-3 .5-4.200-1.600L4.500 20.500q3-.5 4.500 2l1.500-.5.500-1Q5 20 5.500 15q0-1.800 1.200-3Q6 10 7 7.500z" fill="#f0eef2" />
    </svg>), "line"],
  ["line", (
    <svg viewBox="0 0 30 30" className="size-[30px]">
      <rect width="30" height="30" rx="6" fill="#00b900" />
      <path d="M15 3.500c6.500 0 11.500 4 11.500 9.500 0 4-3 7.500-10 13-1.500 1-1.500 0-1-3.500C8 22.300 3.500 18.500 3.500 13S8.500 3.500 15 3.500z" fill="#fff" />
      <text x="6.700" y="15.800" fontSize="6.500" fontWeight="bold" textLength="16" lengthAdjust="spacingAndGlyphs" fontFamily="Liberation Sans" fill="#00b900">LINE</text>
    </svg>), "line"],
  ["acrobat", (
    <svg viewBox="0 0 28 26" className="h-[26px] w-[28px]">
      <path d="M1 1h26v24H1z" fill="#260000" stroke="#e61b0c" strokeWidth="2" />
      <path d="M13 5c2 0 .5 7-1.500 10.500S7 21.500 6.500 20.500s3-3 7-4 7.500-1 8 .3-2.500 1-5-1S12 6 13 5z" fill="none" stroke="#f2e8e8" strokeWidth="1.200" />
    </svg>), "line"],
  ["powerpoint", (
    <svg viewBox="0 0 28 28" className="size-[28px]">
      <path d="M14 4h13v20H14z" fill="#fff" stroke="#d24625" strokeWidth="1.300" />
      <path d="M17 15.500h7.500v1.500H17zM17 18.500h7.500V20H17z" fill="#d24625" />
      <circle cx="19.500" cy="10.500" r="3.500" fill="#d24625" /><path d="M20 6.500h1.500V10H25" stroke="#d24625" fill="#fff" />
      <path d="M0 3 16 .5v27L0 25z" fill="#d24625" />
      <text x="4" y="19.500" fontSize="15" fontWeight="bold" fontFamily="Open Sans" fill="#fff">P</text>
    </svg>), "line"],
  ["photos", (
    <svg viewBox="0 0 27 26" className="h-[26px] w-[27px]">
      <path d="M1 1h25v24H1z" fill="#080808" stroke="#fff" strokeWidth="1.600" />
      <path d="M1 16 9 7.500 16 16l3-5.500 8 8V26H0z" fill="#fff" />
    </svg>), "line"],
  ["calculator", (
    <svg viewBox="0 0 28 28" className="size-[28px]">
      <path d="M0 3 18 0l10 20-14 8z" fill="#d3e6f0" stroke="#6f9ab5" />
      <path d="M2 4.500 16.500 2 19 9 5 12z" fill="#4aa5dc" /><path d="m4 9 2-3 2 4 3-5 2 4 3-4" fill="none" stroke="#e9f6ff" />
      <path d="m8 14 12-3M10 17.500l12-3.500M12 21l12-4M14 24.500l11-5" stroke="#5f86a8" strokeWidth="1.800" strokeDasharray="2.200 1.800" />
      <path d="m7.500 14 4.500-1 1 3-4 1.500z" fill="#39a344" />
    </svg>), "line"],
];

function Taskbar() {
  return (
    <div className="flex h-[50px] shrink-0 bg-linear-to-r from-[#0c1117] via-[#0a0c10] to-[#110b07] text-white">
      <div className="flex w-[60px] items-center justify-center">
        <svg viewBox="0 0 20 20" className="size-[20px]" fill="#fff"><path d="m0 2.500 8.200-1.200v8.200H0zM9.200 1.200 20 0v9.500H9.200zM0 10.500h8.200v8.200L0 17.500zM9.200 10.500H20V20L9.200 18.800z" /></svg>
      </div>
      <div className="flex w-[60px] items-center justify-center">
        <svg viewBox="0 0 20 20" className="size-[20px]" fill="none" stroke="#fff" strokeWidth="1.400"><circle cx="13" cy="7" r="6.300" /><path d="M8.500 11.500.5 19.500" /></svg>
      </div>
      <div className="flex w-[63px] items-center justify-center pr-[3px]">
        <svg viewBox="0 0 24 18" className="h-[18px] w-[24px]" fill="none" stroke="#fff"><path d="M4.500.5h15v17h-15zM3 3.500H.5v11H3M21 3.500h2.500v11H21" /></svg>
      </div>
      {apps.map(([n, pic, mark]) => (
        <div key={n} className="flex w-[62px] flex-col items-center">
          <div className="flex h-[47px] items-center pt-[3px]">{pic}</div>
          {mark !== "none" && (
            <div className="flex h-[3px] w-[51px] bg-[#76b9ed]">
              {mark === "split" && <div className="ml-auto h-full w-[11px] bg-[#5a8cb4]" />}
            </div>
          )}
        </div>
      ))}
      <div className="flex w-[61px] flex-col items-center bg-[#3b3c3f]">
        <div className="flex h-[47px] items-center pt-[3px]"><UnityLogo light className="h-[27px] w-[26px]" /></div>
        <div className="h-[3px] w-full bg-[#76b9ed]" />
      </div>
      <div className="ml-auto flex items-center">
        <svg viewBox="0 0 19 20" className="h-[20px] w-[19px]" fill="none" stroke="#fff" strokeWidth="1.500">
          <circle cx="13" cy="4.500" r="3.700" /><circle cx="6" cy="11" r="3.500" />
          <path d="M.8 19.500q.5-5 5-5t5 5M11 9.500q6-1.500 7 4.500" />
        </svg>
        <svg viewBox="0 0 16 9" className="ml-[28px] h-[9px] w-[16px]" fill="none" stroke="#fff" strokeWidth="1.400"><path d="m.5 8.500 7.500-7.500 7.500 7.500" /></svg>
        <svg viewBox="0 0 19 12" className="ml-[13px] h-[12px] w-[19px]"><path d="M.6.600h16.500v10.500H.6zM17 4h1.500v4H17" fill="none" stroke="#fff" strokeWidth="1.200" /><path d="M2.500 2.500h4.500v7H2.500z" fill="#fff" /></svg>
        <svg viewBox="0 0 16 16" className="ml-[13px] size-[16px]" fill="none" stroke="#ccc" strokeWidth="1.200">
          <path d="M.7 16Q.7 1 15.700.8M4.500 16q0-11 11.200-11.200M8 16q0-7.500 7.700-7.500" /><circle cx="13.500" cy="13.800" r="1.700" fill="#fff" stroke="none" />
        </svg>
        <svg viewBox="0 0 21 18" className="ml-[11px] h-[18px] w-[21px]" fill="none" stroke="#fff" strokeWidth="1.200">
          <path d="M.8 5.500h3L7.500 2v13L3.800 12h-3z" /><path d="M10.500 6.500q1.500 2.300 0 4.500" /><path d="M13.500 4q3 4.800 0 9.500M16.500 1q5 8 0 15.500" stroke="#777" />
        </svg>
        <span className={win + " ml-[12px] w-[29px] text-[14.500px] tracking-[-0.3px]"}>ENG</span>
        <div className={win + " ml-[14px] flex w-[78px] flex-col items-center gap-[9px] text-[14.500px] tracking-[-0.200px]"}>
          <span>22:32</span>
          <span>04/03/2018</span>
        </div>
        <div className="relative ml-[23px] h-[32px] w-[32px]">
          <svg viewBox="0 0 20 22" className="absolute top-[2px] left-0 h-[22px] w-[20px]">
            <path d="M0 0h20v17h-7l-4 4.500V17H0z" fill="#fff" /><path d="M4 4.500h12M4 8.500h12M4 12.500h8" stroke="#15100c" strokeWidth="1.400" />
          </svg>
          <div className={win + " absolute top-[13px] left-[10px] flex size-[20px] items-center justify-center rounded-full border border-[#8a8a8a] bg-[#2d2c2b] text-[14px]"}>1</div>
        </div>
        <div className="ml-[13px] h-full w-px bg-[#5b5957]" />
        <div className="w-[5px]" />
      </div>
    </div>
  );
}

export default function App() {
  return (
    <div className="flex h-[1080px] w-[1920px] flex-col overflow-hidden bg-[#a2a2a2] text-black">
      <div className="flex h-[28px] shrink-0 items-center bg-white">
        <UnityLogo light className="ml-[3px] h-[18px] w-[18px]" />
        <span className={win + " ml-[6px] text-[15px] tracking-[-0.3px]"}>
          Unity 2017.3.1f1 Personal (64bit) - x.unity - LBE IGS - PC, Mac &amp; Linux Standalone &lt;DX11&gt;
        </span>
        <svg viewBox="0 0 130 13" className="mr-[26px] ml-auto h-[13px] w-[130px]" fill="none" stroke="#000" strokeWidth="1.100">
          <path d="M1 6.500h12M59.500 3.500h9v9h-9zM61.500 3.500v-3h9.500v9.500h-2.500M117.500.5l12 12M129.500.5l-12 12" />
        </svg>
      </div>
      <div className={win + " flex h-[26px] shrink-0 items-start border-b-2 border-[#e2e2e2] bg-white pt-[6px] text-[14.500px] tracking-[-0.12px] text-[#222]"}>
        {[
          ["File", "ml-[9px] w-[40px]"],
          ["Edit", "w-[42px]"],
          ["Assets", "w-[59px]"],
          ["GameObject", "w-[100px]"],
          ["Component", "w-[98px]"],
          ["Window", "w-[72px]"],
          ["Help", "w-[60px]"],
        ].map(([m, c]) => (
          <span key={m} className={c}>{m}</span>
        ))}
      </div>
      <Toolbar />
      <div className="flex h-[909px] shrink-0">
        <div className="flex w-[1530px] shrink-0 flex-col">
          <div className="flex gap-[4px]">
            <Hierarchy />
            <Scene />
          </div>
          <div className="mt-[7px] flex gap-[3px]">
            <Project />
            <Game />
          </div>
        </div>
        <div className="w-[3px] shrink-0" />
        <Inspector />
      </div>
      <div className="flex-1" />
      <Taskbar />
    </div>
  );
}
